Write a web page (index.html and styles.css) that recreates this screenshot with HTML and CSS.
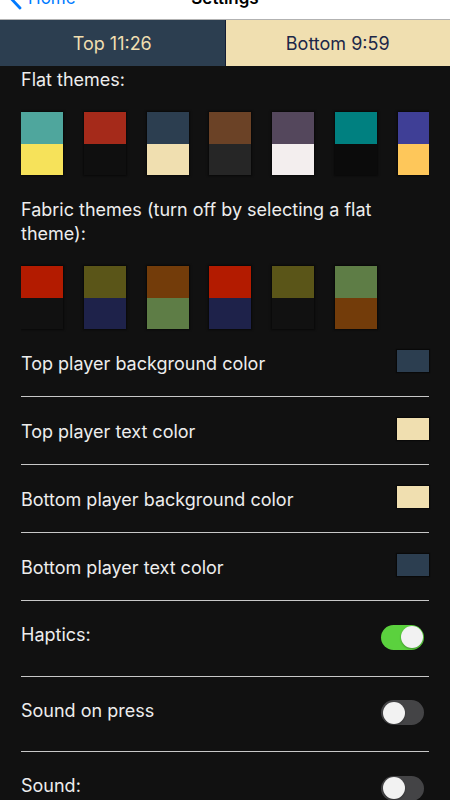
FILE: index.html
```html
<!DOCTYPE html>
<html lang="en">
<head>
<meta charset="utf-8">
<title>Settings</title>
<link rel="stylesheet" href="styles.css">
</head>
<body>
<header class="nav">
  <div class="back">
    <svg class="chev" width="13" height="22" viewBox="0 0 13 22"><path d="M11 2 L2.5 11 L11 20" fill="none" stroke="#007aff" stroke-width="2.8" stroke-linecap="round" stroke-linejoin="round"/></svg>
    <span>Home</span>
  </div>
  <div class="title">Settings</div>
  <div></div>
</header>
<div class="clock">
  <div class="player top">Top 11:26</div>
  <div class="player bottom">Bottom 9:59</div>
</div>
<main class="content">
  <p class="label">Flat themes:</p>
  <div class="swatches">
    <div class="swatch" style="--a:#4fa69d;--b:#f6e25a"><span class="a"></span><span class="b"></span></div>
    <div class="swatch" style="--a:#a52a1a;--b:#0f0f0f"><span class="a"></span><span class="b"></span></div>
    <div class="swatch" style="--a:#2c3e50;--b:#f0dfb0"><span class="a"></span><span class="b"></span></div>
    <div class="swatch" style="--a:#6b4226;--b:#262626"><span class="a"></span><span class="b"></span></div>
    <div class="swatch" style="--a:#54475c;--b:#f3eeee"><span class="a"></span><span class="b"></span></div>
    <div class="swatch" style="--a:#008080;--b:#0b0b0b"><span class="a"></span><span class="b"></span></div>
    <div class="swatch" style="--a:#3f3f96;--b:#fec75a"><span class="a"></span><span class="b"></span></div>
  </div>
  <p class="label fabric">Fabric themes (turn off by selecting a flat theme):</p>
  <div class="swatches">
    <div class="swatch" style="--a:#b31b00;--b:#111111"><span class="a"></span><span class="b"></span></div>
    <div class="swatch" style="--a:#5a5518;--b:#1e224a"><span class="a"></span><span class="b"></span></div>
    <div class="swatch" style="--a:#733c0a;--b:#5e7d46"><span class="a"></span><span class="b"></span></div>
    <div class="swatch" style="--a:#b31b00;--b:#1e224a"><span class="a"></span><span class="b"></span></div>
    <div class="swatch" style="--a:#5a5518;--b:#111111"><span class="a"></span><span class="b"></span></div>
    <div class="swatch" style="--a:#5e7d46;--b:#733c0a"><span class="a"></span><span class="b"></span></div>
  </div>
  <div class="row color">
    <span class="row-label">Top player background color</span>
    <span class="chip navy"></span>
  </div>
  <div class="row color">
    <span class="row-label">Top player text color</span>
    <span class="chip beige"></span>
  </div>
  <div class="row color">
    <span class="row-label">Bottom player background color</span>
    <span class="chip beige"></span>
  </div>
  <div class="row color">
    <span class="row-label">Bottom player text color</span>
    <span class="chip navy"></span>
  </div>
  <div class="row toggle">
    <span class="row-label">Haptics:</span>
    <span class="switch on"><span class="knob"></span></span>
  </div>
  <div class="row toggle">
    <span class="row-label">Sound on press</span>
    <span class="switch"><span class="knob"></span></span>
  </div>
  <div class="row toggle">
    <span class="row-label">Sound:</span>
    <span class="switch"><span class="knob"></span></span>
  </div>
</main>
</body>
</html>
```
FILE: styles.css
```css
html, body {
  margin: 0;
  padding: 0;
}
body {
  background: #111111;
  color: #ededed;
  font-family: Inter, "Noto Sans", "Liberation Sans", sans-serif;
}
.nav {
  box-sizing: border-box;
  height: 44px;
  margin-top: -24px;
  background: #ffffff;
  border-bottom: 1px solid rgba(0, 0, 0, 0.3);
  display: grid;
  grid-template-columns: 1fr auto 1fr;
  align-items: center;
}
.back {
  display: flex;
  align-items: center;
  gap: 6px;
  padding-left: 9px;
  color: #007aff;
  font-size: 17px;
}
.chev {
  display: block;
  margin-top: 2px;
}
.title {
  font-size: 17px;
  font-weight: 600;
  color: #000000;
}
.clock {
  display: flex;
  height: 46px;
}
.player {
  flex: 1 1 0;
  display: flex;
  align-items: center;
  justify-content: center;
  font-size: 18px;
}
.player.top {
  background: #2c3e50;
  color: #f0dfb0;
  border-right: 1px solid #141c33;
}
.player.bottom {
  background: #f0dfb0;
  color: #1c2748;
}
.content {
  padding: 0 21px;
}
.label {
  margin: 1.5px 0 0;
  font-size: 18px;
  line-height: 24px;
}
.label.fabric {
  margin-top: 22.5px;
}
.swatches {
  display: flex;
  gap: 20.8px;
  overflow: hidden;
  padding: 3px 0;
  margin: 17.5px 0 -3px;
}
.swatch {
  flex: 0 0 42px;
  height: 63px;
  display: flex;
  flex-direction: column;
  box-shadow: 0 0 2px 1px rgba(0, 0, 0, 0.55);
}
.swatch span {
  flex: 1 1 0;
}
.swatch .a {
  background: var(--a);
}
.swatch .b {
  background: var(--b);
}
.row {
  display: flex;
  justify-content: space-between;
  align-items: flex-start;
  border-bottom: 1px solid #c8c8c8;
}
.row-label {
  font-size: 18px;
  line-height: 24px;
}
.row.color {
  padding: 20.5px 0 20px;
}
.row.color .row-label {
  margin-top: 2.5px;
}
.chip {
  width: 32px;
  height: 22px;
  box-shadow: 0 0 1px 1px rgba(0, 0, 0, 0.45);
}
.chip.navy {
  background: #2c3e50;
}
.chip.beige {
  background: #f0dfb0;
}
.row.toggle {
  padding: 22px 0 26px;
}
.switch {
  box-sizing: border-box;
  width: 43px;
  height: 25px;
  border-radius: 13px;
  background: #444446;
  display: flex;
  align-items: center;
  padding: 0 1.5px;
  margin: 1.5px 5px 0 0;
}
.switch.on {
  background: #5bd13e;
  justify-content: flex-end;
}
.knob {
  width: 22px;
  height: 22px;
  border-radius: 50%;
  background: #f2f2f2;
  box-shadow: 0 1px 2px rgba(0, 0, 0, 0.3);
}
```
